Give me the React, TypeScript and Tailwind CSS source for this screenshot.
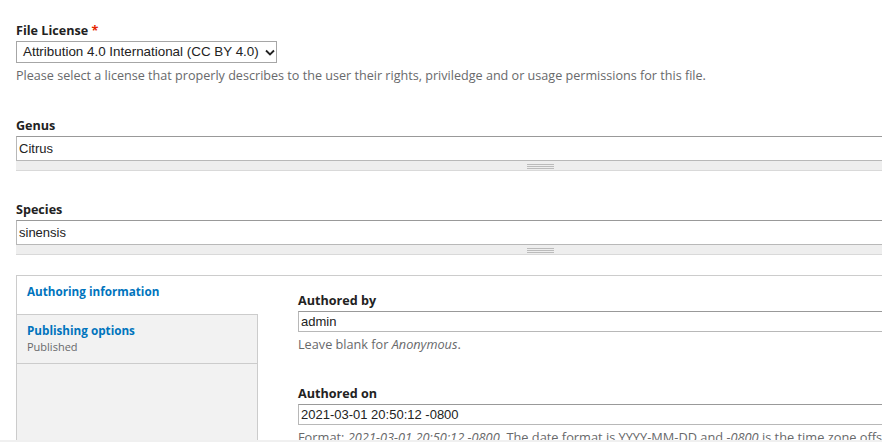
import type React from "react"

const Grippie: React.FC = () => (
  <div className="h-[10px] bg-[#eeeeee] border-b border-[#d9d9d9] flex">
    <div className="w-[27px] mt-[3px] ml-[511px] flex flex-col gap-[1px]">
      <div className="h-px bg-[#bbbbbb]" />
      <div className="h-px bg-[#bbbbbb]" />
      <div className="h-px bg-[#bbbbbb]" />
    </div>
  </div>
)

const TextareaField: React.FC<{ label: string; value: string }> = ({ label, value }) => (
  <div>
    <div className="pt-[1px] text-[12.6px] leading-[18px] font-bold text-[#222]">{label}</div>
    <div className="mt-[1px] h-[25px] border border-[#b8b8b8] border-t-[#999] border-r-0 bg-white pl-[2px] pt-[4px] text-[13px] leading-[16px] text-[#222] font-['Liberation_Sans',Arial,sans-serif]">
      {value}
    </div>
    <Grippie />
  </div>
)

export default function App() {
  return (
    <div className="relative w-[882px] h-[442px] overflow-hidden bg-white font-['Open_Sans',sans-serif] text-[#222]">
      <div className="w-[940px] pl-4 pt-[21px]">
        {/* File license */}
        <div className="pt-[1px] text-[12.6px] leading-[18px] font-bold">
          File License <span className="text-[#e62600]">*</span>
        </div>
        <div className="mt-[1px] w-[261px] h-[22px] border border-[#a6a6a6] flex items-center pl-[6px] font-['Liberation_Sans',Arial,sans-serif] text-[13.4px] text-[#222]">
          <span>Attribution 4.0 International (CC BY 4.0)</span>
          <svg className="ml-[6px]" width="10" height="7" viewBox="0 0 10 7">
            <path d="M1 1.5 L5 5.5 L9 1.5" fill="none" stroke="#222" strokeWidth="1.8" />
          </svg>
        </div>
        <div className="mt-[5px] text-[12.6px] leading-[16px] text-[#68696b]">
          Please select a license that properly describes to the user their rights, priviledge and or usage permissions for this file.
        </div>

        <div className="mt-[32px]">
          <TextareaField label="Genus" value="Citrus" />
        </div>
        <div className="mt-[29px]">
          <TextareaField label="Species" value="sinensis" />
        </div>

        {/* Vertical tabs */}
        <div className="mt-[20px] flex border-t border-l border-[#cccccc] h-[200px]">
          <div className="w-[241px] shrink-0 flex flex-col">
            <div className="h-[38px] bg-white pl-[10px] pt-[6px] text-[11.7px] leading-[18px] font-bold text-[#0074bd]">
              Authoring information
            </div>
            <div className="h-[50px] bg-[#f2f2f2] border-t border-b border-r border-[#cccccc] pl-[10px] pt-[6px]">
              <div className="text-[11.7px] leading-[18px] font-bold text-[#0074bd]">Publishing options</div>
              <div className="text-[11px] leading-[15px] text-[#68696b]">Published</div>
            </div>
            <div className="flex-1 bg-[#f2f2f2] border-r border-[#cccccc]" />
          </div>
          <div className="flex-1 pl-[40px] pt-[15px]">
            <div className="pt-[1px] text-[12.6px] leading-[18px] font-bold">Authored by</div>
            <div className="mt-[1px] h-[21px] border border-[#b8b8b8] border-t-[#999] border-r-0 pl-[2px] pt-[2px] text-[13px] leading-[16px] font-['Liberation_Sans',Arial,sans-serif]">
              admin
            </div>
            <div className="mt-[4px] text-[12.7px] leading-[16px] text-[#68696b]">
              Leave blank for <em>Anonymous</em>.
            </div>
            <div className="mt-[32px] pt-[1px] text-[12.6px] leading-[18px] font-bold">Authored on</div>
            <div className="mt-[1px] h-[21px] border border-[#b8b8b8] border-t-[#999] border-r-0 pl-[2px] pt-[2px] text-[13px] leading-[16px] font-['Liberation_Sans',Arial,sans-serif]">
              2021-03-01 20:50:12 -0800
            </div>
            <div className="mt-[4px] text-[12.8px] leading-[16px] text-[#68696b] whitespace-nowrap">
              Format: <em>2021-03-01 20:50:12 -0800</em>. The date format is YYYY-MM-DD and <em>-0800</em> is the time zone offset from UTC.
            </div>
          </div>
        </div>
      </div>
      <div className="absolute left-0 right-0 bottom-0 h-[2px] bg-[#f0f0f0]" />
    </div>
  )
}
